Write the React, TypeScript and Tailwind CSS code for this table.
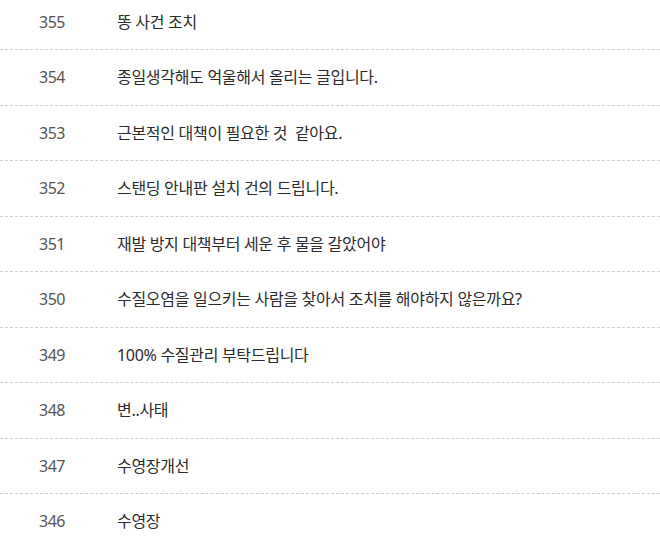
const POSTS = [
  { no: 355, title: "똥 사건 조치" },
  { no: 354, title: "종일생각해도 억울해서 올리는 글입니다." },
  { no: 353, title: "근본적인 대책이 필요한 것  같아요." },
  { no: 352, title: "스탠딩 안내판 설치 건의 드립니다." },
  { no: 351, title: "재발 방지 대책부터 세운 후 물을 갈았어야" },
  { no: 350, title: "수질오염을 일으키는 사람을 찾아서 조치를 해야하지 않은까요?" },
  { no: 349, title: "100% 수질관리 부탁드립니다" },
  { no: 348, title: "변..사태" },
  { no: 347, title: "수영장개선" },
  { no: 346, title: "수영장" },
];

export default function App() {
  return (
    <div className="w-[660px] h-[547px] overflow-hidden bg-white font-['Noto_Sans','Noto_Sans_CJK_KR',sans-serif]">
      <ul className="-mt-[5.5px]">
        {POSTS.map((p) => (
          <li
            key={p.no}
            className="flex items-center h-[55.5px] border-b border-dashed border-[#cfcfcf] text-[16px]"
          >
            <span className="w-[117px] pl-[39px] text-[#555] tracking-[-0.5px]">{p.no}</span>
            <span className="text-[#2b2b2b] tracking-[-0.3px] whitespace-pre">{p.title}</span>
          </li>
        ))}
      </ul>
    </div>
  );
}
